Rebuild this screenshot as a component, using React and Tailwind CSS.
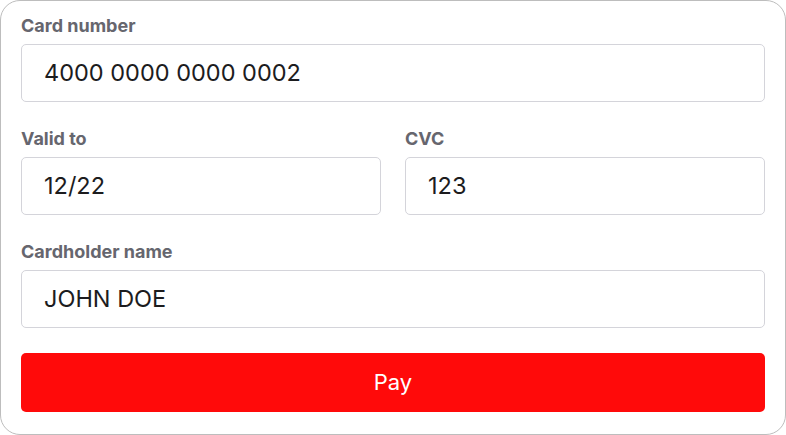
import React from 'react';

function Field({ label, value, className = '' }) {
  return (
    <div className={`flex flex-col ${className}`}>
      <label className="h-[22px] mb-[7px] text-[18px] leading-[22px] font-bold text-[#66666e]">{label}</label>
      <div className="h-[58px] flex items-center pl-[22px] pr-6 border border-[#d4d4da] rounded-[5px] bg-white text-[23.5px] text-[#1c1c1e]">
        {value}
      </div>
    </div>
  );
}

export default function App() {
  return (
    <div className="w-[786px] h-[435px] bg-white" style={{ fontFamily: 'Inter, "Liberation Sans", sans-serif' }}>
      <div className="h-full border border-[#bdbdbd] rounded-[20px] px-5 pt-[14px] flex flex-col gap-[26px]">
        <Field label="Card number" value="4000 0000 0000 0002" />
        <div className="grid grid-cols-2 gap-6">
          <Field label="Valid to" value="12/22" />
          <Field label="CVC" value="123" />
        </div>
        <Field label="Cardholder name" value="JOHN DOE" />
        <button className="-mt-px h-[59px] rounded-[5px] bg-[#ff0a0a] text-white text-[22px]">Pay</button>
      </div>
    </div>
  );
}
